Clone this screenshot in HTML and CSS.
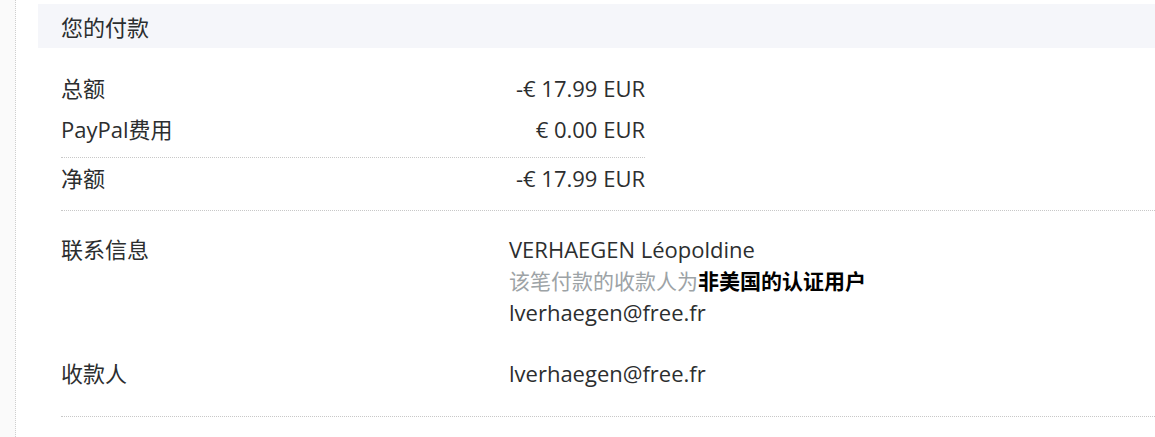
FILE: index.html
```html
<!DOCTYPE html>
<html lang="zh-CN">
<head>
<meta charset="utf-8">
<title>您的付款</title>
<link rel="stylesheet" href="styles.css">
</head>
<body>
<div class="page">
  <div class="rail"></div>
  <div class="main">
    <div class="header">您的付款</div>
    <div class="content">
      <div class="summary">
        <div class="fees">
          <div class="row"><span class="label">总额</span><span class="amount">-€ 17.99 EUR</span></div>
          <div class="row"><span class="label">PayPal费用</span><span class="amount">€ 0.00 EUR</span></div>
        </div>
        <div class="row net"><span class="label">净额</span><span class="amount">-€ 17.99 EUR</span></div>
      </div>
      <div class="details">
        <div class="detail">
          <div class="dlabel">联系信息</div>
          <div class="dvalue">
            <div class="line">VERHAEGEN Léopoldine</div>
            <div class="line note">该笔付款的收款人为<strong>非美国的认证用户</strong></div>
            <div class="line">lverhaegen@free.fr</div>
          </div>
        </div>
        <div class="detail second">
          <div class="dlabel">收款人</div>
          <div class="dvalue">
            <div class="line">lverhaegen@free.fr</div>
          </div>
        </div>
      </div>
    </div>
  </div>
</div>
</body>
</html>
```

FILE: styles.css
```css
html, body {
  margin: 0;
  padding: 0;
  background: #ffffff;
}
body {
  font-family: "Open Sans", "Noto Sans CJK SC", sans-serif;
  color: #2c2e2f;
  font-size: 22px;
}
.page {
  display: flex;
  min-height: 437px;
}
.rail {
  width: 15px;
  flex: none;
  background: #fafafa;
  border-right: 1px dotted #cfcfcf;
}
.main {
  flex: 1;
  padding-left: 22px;
  padding-top: 4px;
}
.header {
  height: 44px;
  background: #f5f6fa;
  padding-left: 23px;
  display: flex;
  align-items: center;
  font-size: 22px;
}
.content {
  padding-left: 23px;
}
.summary {
  padding-top: 20px;
  padding-bottom: 11px;
  border-bottom: 1px dotted #c8c8c8;
}
.fees {
  width: 584px;
  padding-bottom: 7px;
  border-bottom: 1px dotted #c8c8c8;
}
.row {
  display: flex;
  justify-content: space-between;
  line-height: 41px;
  height: 41px;
}
.net {
  width: 584px;
}
.details {
  padding-top: 23px;
  padding-bottom: 27px;
  border-bottom: 1px dotted #c8c8c8;
}
.detail {
  display: flex;
}
.detail.second {
  margin-top: 29px;
}
.dlabel {
  width: 448px;
  flex: none;
  line-height: 31.5px;
}
.dvalue .line {
  line-height: 31.5px;
  height: 31.5px;
  white-space: nowrap;
}
.note {
  color: #9da3a6;
  font-size: 21px;
}
.note strong {
  color: #000000;
  font-weight: 700;
}
```
